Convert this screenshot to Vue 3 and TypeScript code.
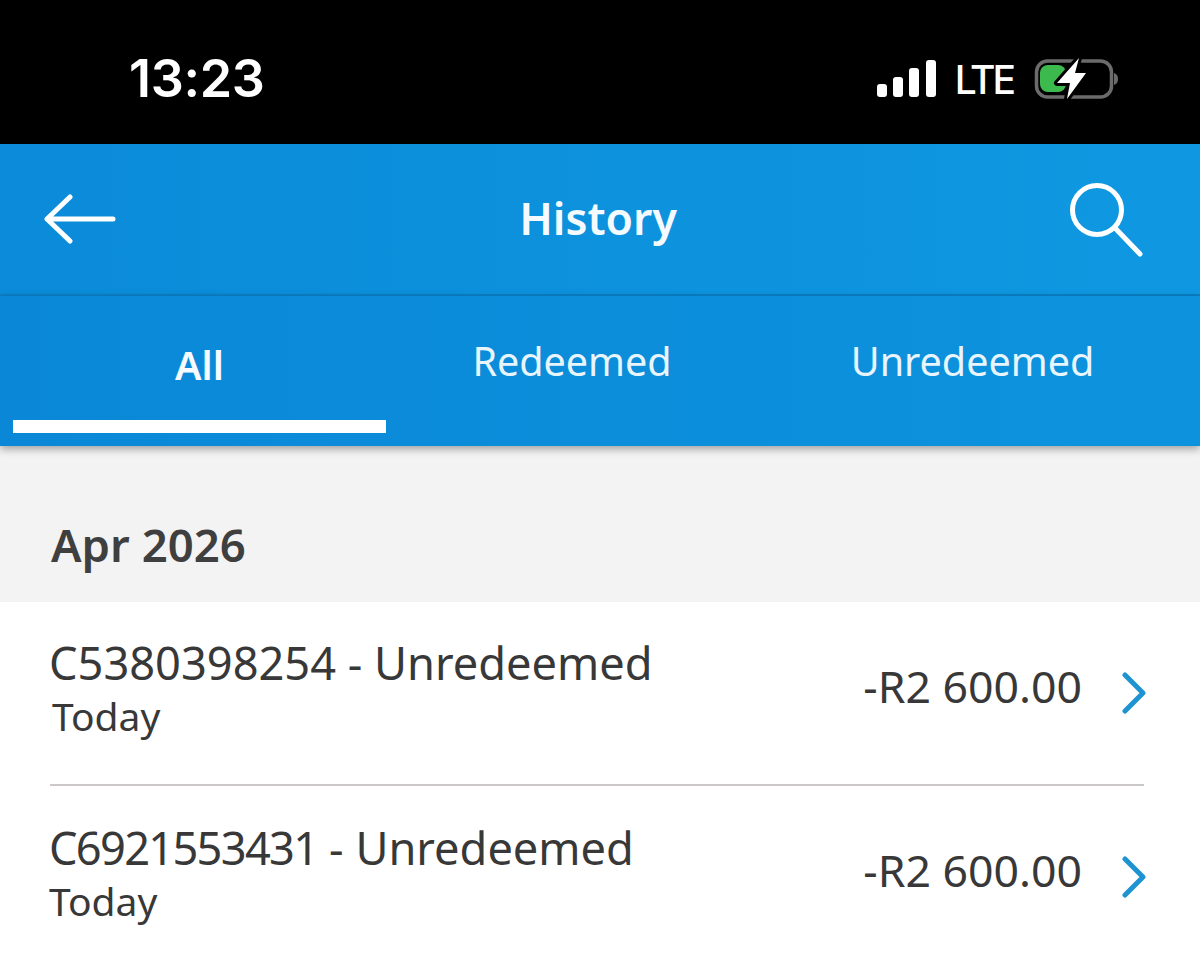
<template>
  <div class="screen">
    <div class="status-bar">
      <span class="clock">13:23</span>
      <div class="status-icons">
        <div class="signal">
          <span v-for="h in signalHeights" :key="h" class="signal-bar" :style="{ height: `${h}px` }"></span>
        </div>
        <span class="network">LTE</span>
        <svg class="battery" width="86" height="46" viewBox="0 0 86 46">
          <rect x="2.5" y="5" width="75" height="36" rx="11" fill="none" stroke="#6b6b6b" stroke-width="3.5" />
          <path d="M80 17c3 1 4 3 4 6s-1 5-4 6z" fill="#6b6b6b" />
          <rect x="6" y="9" width="26" height="27" rx="8" fill="#3dba4e" />
          <path d="M45 2 23 27h13l-3 16 19-26H41z" fill="#fff" stroke="#000" stroke-width="6" paint-order="stroke" stroke-linejoin="round" />
        </svg>
      </div>
    </div>

    <header class="app-header">
      <svg class="back-icon" width="72" height="50" viewBox="0 0 72 50">
        <path d="M26 3 3 25l23 22M3 25h66" fill="none" stroke="#fff" stroke-width="5" stroke-linecap="round" stroke-linejoin="round" />
      </svg>
      <h1 class="title">History</h1>
      <svg class="search-icon" width="76" height="76" viewBox="0 0 76 76">
        <circle cx="29" cy="29" r="24.5" fill="none" stroke="#fff" stroke-width="5" />
        <path d="M47 47l25 26" fill="none" stroke="#fff" stroke-width="5" stroke-linecap="round" />
      </svg>
    </header>

    <nav class="tabs">
      <div
        v-for="tab in tabs"
        :key="tab"
        class="tab"
        :class="{ 'is-active': tab === activeTab }"
      >
        {{ tab }}
      </div>
    </nav>

    <div class="month">Apr 2026</div>

    <ul class="list">
      <li v-for="item in items" :key="item.code" class="row" :class="item.cls">
        <div class="row-main">
          <div class="row-title"><span class="row-code">{{ item.code }}</span> - {{ item.status }}</div>
          <div class="row-date">{{ item.date }}</div>
        </div>
        <div class="row-amount">{{ item.amount }}</div>
        <svg class="chevron" width="24" height="42" viewBox="0 0 24 42">
          <path d="M3 3l18 18L3 39" fill="none" stroke="#1f93d2" stroke-width="5" stroke-linecap="round" stroke-linejoin="round" />
        </svg>
      </li>
    </ul>
  </div>
</template>

<script setup lang="ts">
const signalHeights = [13, 20, 29, 37];
const activeTab = 'All';
const tabs = ['All', 'Redeemed', 'Unredeemed'];

const items = [
  { code: 'C5380398254', status: 'Unredeemed', date: 'Today', amount: '-R2 600.00', cls: 'row-first' },
  { code: 'C6921553431', status: 'Unredeemed', date: 'Today', amount: '-R2 600.00', cls: 'row-second' },
];
</script>

<style>
html,
body {
  margin: 0;
  background: #fff;
}
</style>

<style scoped>
.screen {
  width: 1200px;
  height: 957px;
  overflow: hidden;
  background: #fff;
  font-family: "Noto Sans", "Open Sans", sans-serif;
}

.status-bar {
  height: 144px;
  background: #000;
  color: #fff;
  display: flex;
  align-items: center;
  justify-content: space-between;
  padding: 0 80px 0 129px;
  box-sizing: border-box;
}

.clock {
  font-family: Inter, "Noto Sans", sans-serif;
  font-size: 52px;
  font-weight: 600;
  line-height: 1;
  margin-top: 14px;
  letter-spacing: -0.3px;
}

.status-icons {
  display: flex;
  align-items: center;
  margin-top: 12px;
}

.signal {
  display: flex;
  align-items: flex-end;
  gap: 6.3px;
  height: 38px;
}

.signal-bar {
  width: 10px;
  background: #fff;
  border-radius: 3px;
}

.network {
  font-family: Inter, "Noto Sans", sans-serif;
  font-size: 39px;
  line-height: 1;
  font-weight: 500;
  letter-spacing: -3px;
  margin: 2px 21px 0 19px;
}

.battery {
  display: block;
  margin-top: 2px;
}

.app-header {
  height: 152px;
  box-sizing: border-box;
  background: linear-gradient(90deg, #0b8bd9, #0f98e1);
  display: grid;
  grid-template-columns: 1fr auto 1fr;
  align-items: center;
  padding: 0 56px 0 44px;
  border-bottom: 2px solid #0b80c8;
}

.title {
  margin: -2px 0 0 8px;
  font-size: 44.6px;
  font-weight: 600;
  color: #f4fafd;
  line-height: 1;
}

.search-icon {
  justify-self: end;
}

.tabs {
  height: 150px;
  background: linear-gradient(90deg, #0a88d7, #0d93de);
  display: grid;
  grid-template-columns: 399px 346px 1fr;
  color: #e9f5fc;
  font-size: 39.5px;
  box-shadow: 0 3px 8px rgba(0, 0, 0, 0.35);
  position: relative;
}

.tab {
  text-align: center;
  padding-top: 40px;
  line-height: 50px;
  position: relative;
}

.tab.is-active {
  color: #f7fbfe;
  font-weight: 600;
  padding-top: 44px;
}

.tab.is-active::after {
  content: "";
  position: absolute;
  left: 13px;
  width: 373px;
  top: 124px;
  height: 13px;
  background: #fff;
}

.month {
  height: 156px;
  box-sizing: border-box;
  background: #f4f3f3;
  padding: 70px 0 0 51px;
  font-size: 45.5px;
  line-height: 56px;
  font-weight: 600;
  color: #3f3f3f;
}

.list {
  margin: 0;
  padding: 0 56px 0 50px;
  list-style: none;
}

.row {
  display: flex;
  align-items: center;
  height: 183px;
  box-sizing: border-box;
  color: #383838;
}

.row-first {
  height: 182px;
}

.row + .row {
  border-top: 2px solid #cbc8c7;
}

.row-main {
  flex: 1;
  padding-bottom: 10px;
}

.row-title {
  font-size: 45.2px;
  line-height: 54px;
  margin-left: -1px;
}

.row-date {
  font-size: 39px;
  line-height: 50px;
  margin-top: 1px;
}

.row-first .row-date {
  margin-left: 2px;
}

.row-second .row-main {
  padding-bottom: 7px;
}

.row-second .row-code {
  letter-spacing: -1.7px;
}

.row-second .row-date {
  margin-left: -1px;
}

.row-amount {
  font-size: 44.6px;
  line-height: 54px;
  margin: 0 40px 14px 0;
}

.chevron {
  margin-right: -2px;
}
</style>
